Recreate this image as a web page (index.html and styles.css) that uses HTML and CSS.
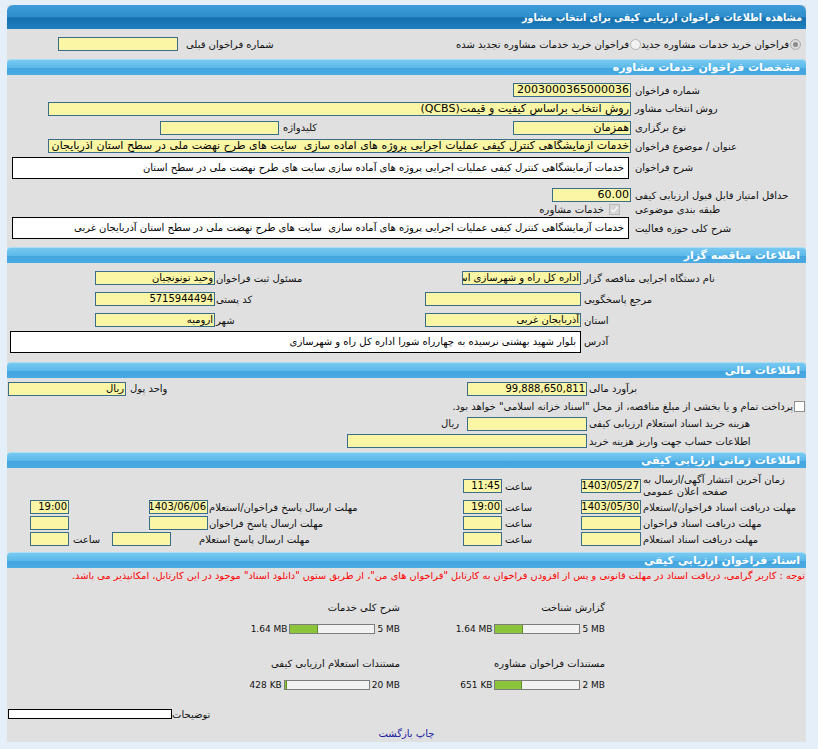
FILE: index.html
```html
<!DOCTYPE html>
<html lang="fa" dir="rtl">
<head>
<meta charset="utf-8">
<title>مشاهده اطلاعات فراخوان</title>
<link rel="stylesheet" href="styles.css">
</head>
<body>
<div class="page">
  <div class="title">مشاهده اطلاعات فراخوان ارزیابی کیفی برای انتخاب مشاور</div>

  <div class="typerow">
    <span class="opt"><span class="radio on"></span>فراخوان خرید خدمات مشاوره جدید</span>
    <span class="opt"><span class="radio"></span>فراخوان خرید خدمات مشاوره تجدید شده</span>
    <span class="prev"><span class="lbl">شماره فراخوان قبلی</span><span class="fld w120"></span></span>
  </div>

  <div class="sh">مشخصات فراخوان خدمات مشاوره</div>
  <div class="s1">
    <div class="lbl">شماره فراخوان</div>
    <div class="cell"><span class="fld big w118">2003000365000036</span></div>

    <div class="lbl">روش انتخاب مشاور</div>
    <div class="cell"><span class="fld big w583">روش انتخاب براساس کیفیت و قیمت(QCBS)</span></div>

    <div class="lbl">نوع برگزاری</div>
    <div class="cell"><span class="fld big w118">همزمان</span><span class="kw"><span class="lbl">کلیدواژه</span><span class="fld big w119"></span></span></div>

    <div class="lbl">عنوان / موضوع فراخوان</div>
    <div class="cell"><span class="fld big w583">خدمات آزمایشگاهی کنترل کیفی عملیات اجرایی پروژه های آماده سازی &nbsp;سایت های طرح نهضت ملی در سطح استان آذربایجان غربی</span></div>

    <div class="lbl boxlbl">شرح فراخوان</div>
    <div class="cell boxcell"><div class="box w617">خدمات آزمایشگاهی کنترل کیفی عملیات اجرایی پروژه های آماده سازی سایت های طرح نهضت ملی در سطح استان</div></div>

    <div class="lbl">حداقل امتیاز قابل قبول ارزیابی کیفی</div>
    <div class="cell"><span class="fld big w79">60.00</span></div>

    <div class="lbl">طبقه بندی موضوعی</div>
    <div class="cell"><span class="chk-group"><span class="chk dis"><svg viewBox="0 0 11 11" width="11" height="11"><path d="M2.2 5.6 L4.4 7.8 L8.8 2.9" fill="none" stroke="#f4f4f4" stroke-width="1.6"/></svg></span><span class="lbl">خدمات مشاوره</span></span></div>

    <div class="lbl">شرح کلی حوزه فعالیت</div>
    <div class="cell"><div class="box w617">خدمات آزمایشگاهی کنترل کیفی عملیات اجرایی پروژه های آماده سازی &nbsp;سایت های طرح نهضت ملی در سطح استان آذربایجان غربی</div></div>
  </div>

  <div class="sh">اطلاعات مناقصه گزار</div>
  <div class="s2">
    <div class="lbl">نام دستگاه اجرایی مناقصه گزار</div>
    <div class="cell"><span class="fld w119">اداره کل راه و شهرسازی استان آذربایجان غربی</span></div>
    <div class="lbl">مسئول ثبت فراخوان</div>
    <div class="cell"><span class="fld w120">وحید تونونچیان</span></div>
    <div></div>

    <div class="lbl">مرجع پاسخگویی</div>
    <div class="cell"><span class="fld w156"></span></div>
    <div class="lbl">کد پستی</div>
    <div class="cell"><span class="fld w120">5715944494</span></div>
    <div></div>

    <div class="lbl">استان</div>
    <div class="cell"><span class="fld w156">آذربایجان غربی</span></div>
    <div class="lbl">شهر</div>
    <div class="cell"><span class="fld w120">ارومیه</span></div>
    <div></div>

    <div class="lbl">آدرس</div>
    <div class="cell addr"><div class="box w571">بلوار شهید بهشتی نرسیده به چهارراه شورا اداره کل راه و شهرسازی</div></div>
  </div>

  <div class="sh">اطلاعات مالی</div>
  <div class="s3">
    <div class="lbl">برآورد مالی</div>
    <div class="cell"><span class="fld w120">99,888,650,811</span></div>
    <div class="cell left"><span class="lbl">واحد پول</span><span class="fld w118">ریال</span></div>

    <div class="cell full"><span class="chk"></span><span class="lbl">پرداخت تمام و یا بخشی از مبلغ مناقصه، از محل "اسناد خزانه اسلامی" خواهد بود.</span></div>

    <div class="lbl">هزینه خرید اسناد استعلام ارزیابی کیفی</div>
    <div class="cell"><span class="fld w120"></span></div>
    <div class="cell"><span class="lbl rial">ریال</span></div>

    <div class="lbl">اطلاعات حساب جهت واریز هزینه خرید</div>
    <div class="cell wide"><span class="fld w240"></span></div>
  </div>

  <div class="sh">اطلاعات زمانی ارزیابی کیفی</div>
  <div class="s4">
    <div class="lbl l1 two">زمان آخرین انتشار آگهی/ارسال به<br>صفحه اعلان عمومی</div>
    <div class="cell"><span class="fld w60">1403/05/27</span></div>
    <div class="lbl s">ساعت</div>
    <div class="cell"><span class="fld w39">11:45</span></div>
    <div class="rest"></div>

    <div class="lbl l1">مهلت دریافت اسناد فراخوان/استعلام</div>
    <div class="cell"><span class="fld w60">1403/05/30</span></div>
    <div class="lbl s">ساعت</div>
    <div class="cell"><span class="fld w39">19:00</span></div>
    <div class="lbl l2">مهلت ارسال پاسخ فراخوان/استعلام</div>
    <div class="cell"><span class="fld w59">1403/06/06</span></div>
    <div class="lbl s2">ساعت</div>
    <div class="cell"><span class="fld w39">19:00</span></div>
    <div></div>

    <div class="lbl l1">مهلت دریافت اسناد فراخوان</div>
    <div class="cell"><span class="fld w60"></span></div>
    <div class="lbl s">ساعت</div>
    <div class="cell"><span class="fld w39"></span></div>
    <div class="lbl l2">مهلت ارسال پاسخ فراخوان</div>
    <div class="cell"><span class="fld w59"></span></div>
    <div class="lbl s2">ساعت</div>
    <div class="cell"><span class="fld w39"></span></div>
    <div></div>

    <div class="lbl l1">مهلت دریافت اسناد استعلام</div>
    <div class="cell"><span class="fld w60"></span></div>
    <div class="lbl s">ساعت</div>
    <div class="cell"><span class="fld w39"></span></div>
    <div class="rest r4"><span class="lbl">مهلت ارسال پاسخ استعلام</span><span class="fld w59"></span><span class="lbl saat">ساعت</span><span class="fld w39"></span></div>
  </div>

  <div class="sh">اسناد فراخوان ارزیابی کیفی</div>
  <div class="s5">
    <div class="note">توجه : کاربر گرامی، دریافت اسناد در مهلت قانونی و پس از افزودن فراخوان به کارتابل "فراخوان های من"، از طریق ستون "دانلود اسناد" موجود در این کارتابل، امکانپذیر می باشد.</div>
    <div class="docs">
      <div class="doc c1">
        <div class="dl">گزارش شناخت</div>
        <div class="barrow"><span class="mx">5 MB</span><span class="bar"><i style="width:33%"></i></span><span class="mn">1.64 MB</span></div>
      </div>
      <div class="doc c2">
        <div class="dl">شرح کلی خدمات</div>
        <div class="barrow"><span class="mx">5 MB</span><span class="bar"><i style="width:33%"></i></span><span class="mn">1.64 MB</span></div>
      </div>
      <div class="doc c1">
        <div class="dl">مستندات فراخوان مشاوره</div>
        <div class="barrow"><span class="mx">2 MB</span><span class="bar"><i style="width:32%"></i></span><span class="mn">651 KB</span></div>
      </div>
      <div class="doc c2">
        <div class="dl">مستندات استعلام ارزیابی کیفی</div>
        <div class="barrow"><span class="mx">20 MB</span><span class="bar"><i style="width:3%"></i></span><span class="mn">428 KB</span></div>
      </div>
    </div>
    <div class="desc"><span class="lbl">توضیحات</span><span class="descbox"></span></div>
    <div class="links"><a href="#">چاپ</a> <a href="#">بازگشت</a></div>
  </div>
</div>
</body>
</html>
```

FILE: styles.css
```css
* { box-sizing: border-box; }
html, body { margin: 0; }
body {
  background: #e4eff9;
  padding: 5px 12px 0 7px;
  font-family: "DejaVu Sans", sans-serif;
  font-size: 10px;
  color: #111;
  direction: rtl;
}
.page {
  background: #e0e0e0;
  width: 799px;
  overflow: hidden;
}
.title {
  height: 24px;
  line-height: 24px;
  padding-right: 4px;
  color: #fff;
  font-family: "DejaVu Sans Condensed", "DejaVu Sans", sans-serif;
  font-stretch: condensed;
  font-weight: bold;
  font-size: 10.5px;
  border-radius: 6px 6px 0 0;
  background: linear-gradient(#3d9cd8 0%, #2e8ecd 50%, #1671ad 53%, #1e7ebe 100%);
}
.typerow {
  height: 30px;
  display: flex;
  align-items: center;
  padding-right: 5px;
}
.opt { display: flex; align-items: center; white-space: nowrap; }
.radio {
  width: 11px; height: 11px;
  border-radius: 50%;
  border: 1px solid #b4b4b4;
  background: #f2f2f2;
  margin-left: 1px;
  display: flex; align-items: center; justify-content: center;
}
.radio.on { background: #dcdcdc; border-color: #a8a8a8; }
.radio.on::after {
  content: ""; width: 5px; height: 5px; border-radius: 50%; background: #8c8c8c;
}
.prev {
  margin-right: auto;
  margin-left: 51px;
  display: flex; align-items: center; gap: 8px;
}
.lbl { white-space: nowrap; text-align: left; }

.fld {
  display: block;
  height: 14px;
  line-height: 12px;
  border: 1px solid #3a6d8c;
  background: #fbf6a5;
  overflow: hidden;
  white-space: nowrap;
  padding: 0 1px;
  font-size: 10px;
  color: #000;
}
.fld.big { font-size: 11px; }
.w39 { width: 39px; } .w59 { width: 59px; } .w60 { width: 60px; }
.w79 { width: 79px; } .w118 { width: 118px; } .w119 { width: 119px; }
.w120 { width: 120px; } .w156 { width: 156px; } .w240 { width: 240px; }
.w583 { width: 583px; }
.box {
  height: 22px;
  line-height: 20px;
  border: 1px solid #000;
  background: #fff;
  padding: 0 4px;
  white-space: nowrap;
  overflow: hidden;
  font-size: 10px;
  color: #000;
}
.w617 { width: 617px; margin-right: 2px; }
.w571 { width: 571px; }

.sh {
  height: 16px;
  line-height: 15px;
  color: #fff;
  font-weight: bold;
  font-size: 11px;
  padding-right: 6px;
  border-radius: 4px 4px 0 0;
  border-top: 1px solid #a9def6;
  background: linear-gradient(#78c9f1 0%, #5cb9ea 50%, #43a5df 55%, #4aaae2 100%);
}
.cell { display: flex; align-items: center; min-width: 0; }

/* section 1 */
.s1 {
  display: grid;
  grid-template-columns: 174px 625px;
  grid-template-rows: 18px 19px 19px 18px 32px 16px 13px 24px;
  padding: 6px 0 7px;
  align-items: center;
}
.s1 > .lbl { padding-left: 3px; }
.s1 > .cell { padding-right: 1px; }
.s1 .boxlbl { align-self: start; margin-top: 2px; line-height: 22px; }
.s1 .boxcell { align-self: start; margin-top: 2px; }
.kw { margin-right: auto; margin-left: 153px; display: flex; align-items: center; gap: 4px; }
.chk-group { display: flex; align-items: center; gap: 5px; margin-right: 11px; }
.chk {
  width: 11px; height: 11px;
  border: 1px solid #8e8e8e;
  background: #fff;
  flex: none;
  display: flex;
}
.chk.dis { background: #d6d6d6; border-color: #b9b9b9; }
.chk svg { display: block; margin: -1px; }

/* section 2 */
.s2 {
  display: grid;
  grid-template-columns: 225px 156px 210px 120px 88px;
  grid-template-rows: 18px 24px 18px 25px;
  padding: 6px 0 8px;
  align-items: center;
}
.s2 > .lbl { padding-left: 3px; }
.s2 > .lbl:nth-child(5n+3) { padding-left: 1px; }
.s2 .addr { grid-column: 2 / 6; padding-left: 3px; }

/* section 3 */
.s3 {
  display: grid;
  grid-template-columns: 219px 120px 460px;
  grid-template-rows: 17px 18px 17px 18px;
  padding: 2px 0;
  align-items: center;
}
.s3 > .lbl { padding-left: 2px; }
.s3 .left { justify-content: flex-end; gap: 4px; padding-left: 1px; }
.s3 .full { grid-column: 1 / -1; gap: 1px; padding-right: 1px; }
.s3 .rial { margin-right: 8px; }
.s3 .wide { grid-column: 2 / 4; }

/* section 4 */
.s4 {
  display: grid;
  grid-template-columns: 165px 60px 79px 39px 255px 59px 80px 39px 23px;
  grid-template-rows: 26px 16px 16px 16px;
  padding: 5px 0;
  align-items: center;
}
.s4 .l1 { padding-left: 2px; }
.s4 .two { line-height: 12px; }
.s4 .s { padding-left: 3px; }
.s4 .l2 { padding-left: 1px; }
.s4 .s2 { padding-left: 4px; }
.s4 .rest { grid-column: 5 / 10; }
.s4 .r4 { display: flex; align-items: center; justify-content: flex-end; padding-left: 23px; }
.s4 .r4 .fld.w59 { margin-right: 28px; }
.s4 .r4 .saat { width: 43px; padding-left: 4px; }

/* section 5 */
.s5 { padding-bottom: 2px; }
.note {
  height: 15px;
  line-height: 15px;
  color: #f00;
  font-size: 9.8px;
  white-space: nowrap;
  padding-right: 1px;
}
.docs {
  display: grid;
  grid-template-columns: 201px 205px 393px;
  row-gap: 20px;
  padding-top: 17px;
}
.doc { display: flex; flex-direction: column; align-items: flex-start; gap: 6px; }
.doc.c1 { grid-column: 2; }
.doc.c2 { grid-column: 3; }
.dl { height: 16px; line-height: 16px; }
.barrow { display: flex; align-items: center; height: 14px; gap: 2px; font-size: 9px; }
.mx, .mn { direction: ltr; unicode-bidi: isolate; }
.bar {
  width: 86px; height: 10px;
  border: 1px solid #7d7d7d;
  background: #f2f2f2;
  display: flex;
  direction: ltr;
}
.bar i { display: block; height: 100%; background: #8cc43c; border-right: 1px solid #5f8f22; }
.desc {
  margin-top: 15px;
  height: 14px;
  display: flex;
  align-items: center;
  justify-content: flex-end;
  padding-left: 1px;
}
.descbox { width: 164px; height: 10px; border: 1px solid #000; background: #fff; }
.links {
  margin-top: 7px;
  height: 12px;
  line-height: 12px;
  text-align: center;
}
.links a { color: #1b1ba0; text-decoration: none; }
```
